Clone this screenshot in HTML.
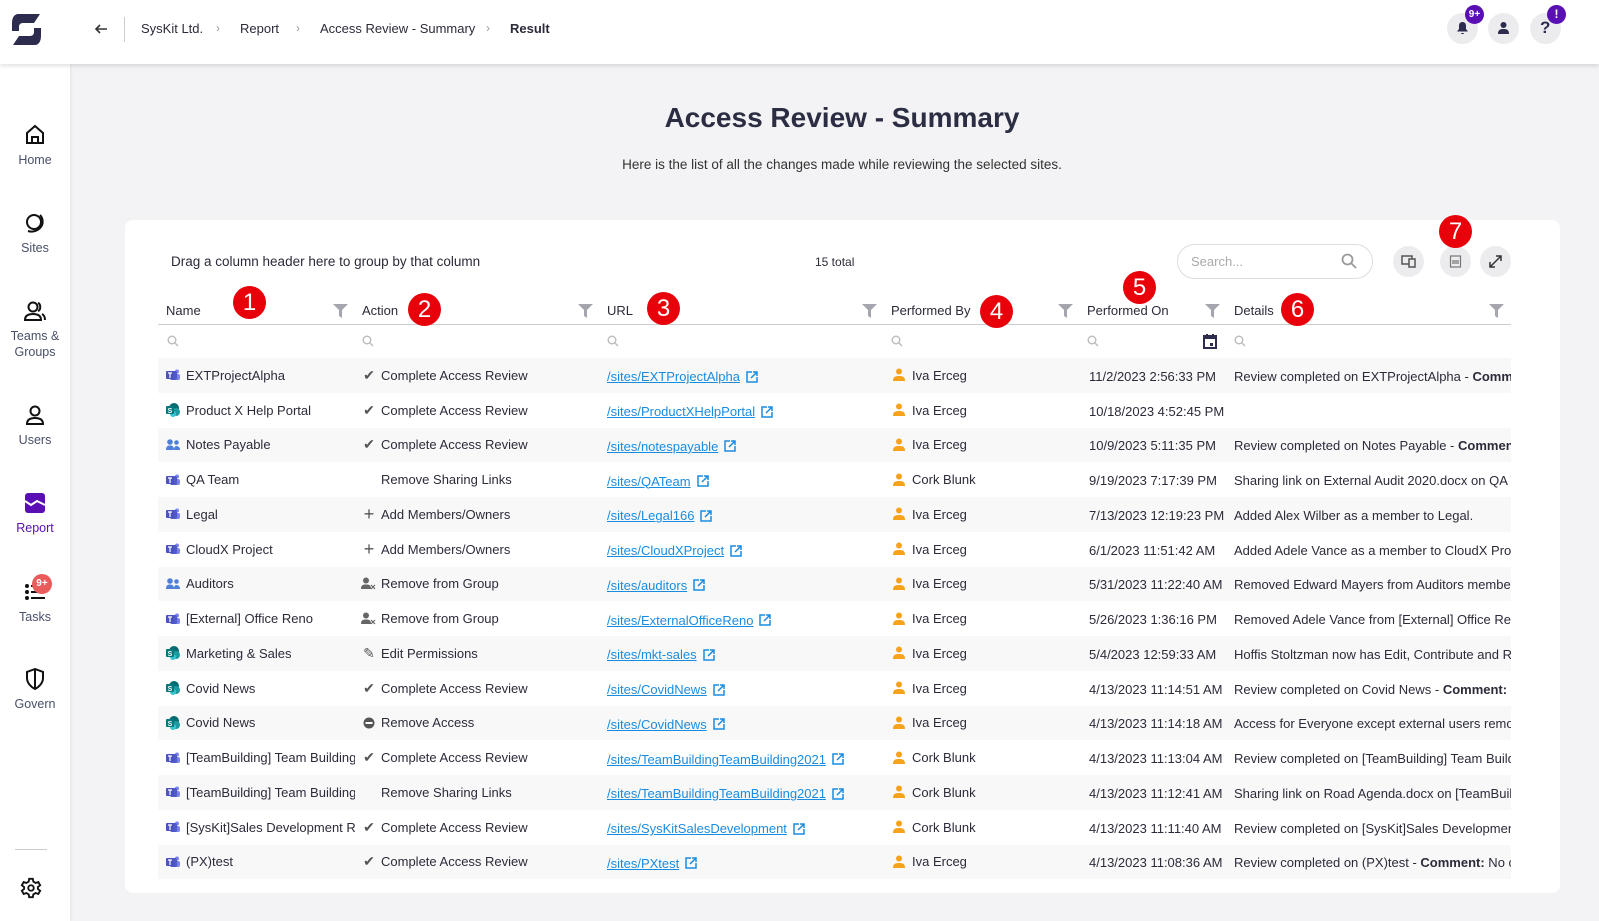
<!DOCTYPE html>
<html><head><meta charset="utf-8"><style>
*{box-sizing:border-box;margin:0;padding:0}
body{width:1599px;height:921px;overflow:hidden;background:#f3f3f5;font-family:"Liberation Sans",sans-serif;color:#2b2b3a;position:relative}
.top{position:absolute;left:0;top:0;width:1599px;height:64px;background:#fff;box-shadow:0 2px 4px rgba(0,0,0,.12);z-index:2}
.side{position:absolute;left:0;top:64px;width:70px;height:857px;background:#fff;box-shadow:1px 0 3px rgba(0,0,0,.06)}
.nav{position:absolute;left:0;width:70px;text-align:center;font-size:12.5px;color:#4a4f6a;line-height:16px}
.nav svg{display:block;margin:0 auto 6px}
.bc{position:absolute;top:21px;font-size:13px;color:#2b2b3a}
.sep{position:absolute;top:21px;font-size:12px;color:#999}
.cb{position:absolute;width:31px;height:31px;border-radius:50%;background:#ececef;top:13px}
.bd{position:absolute;background:#5a0fb4;color:#fff;border-radius:50%;font-size:10px;font-weight:bold;text-align:center}
h1{position:absolute;left:0;width:1684px;top:102px;text-align:center;font-size:28px;font-weight:bold;color:#2b2d42}
.sub{position:absolute;width:1684px;top:157px;text-align:center;font-size:13.5px;color:#333}
.card{position:absolute;left:125px;top:220px;width:1435px;height:673px;background:#fff;border-radius:8px}
.hd{position:absolute;top:303px;font-size:13px;color:#2b2b3a}
.flt{position:absolute;top:304px}
.mg{position:absolute;top:335px}
.num{position:absolute;width:33px;height:33px;border-radius:50%;background:#e8000a;color:#fff;font-size:24px;text-align:center;line-height:33px;font-family:"Liberation Sans",sans-serif}
.rows{position:absolute;left:158px;top:358px;width:1353px}
.r{height:34.75px;display:flex;font-size:13px;color:#2b2b3a;align-items:center;white-space:nowrap}
.r:nth-child(odd){background:#f8f8f8}
.c{overflow:hidden;display:flex;align-items:center;height:100%}
.n{width:197px;padding-left:8px}.a{width:245px;padding-left:6px}.u{width:284px;padding-left:7px;padding-top:3px}.p{width:196px;padding-left:9px}.d{width:147px;padding-left:9px;padding-top:2px}.x{width:284px;padding-left:7px;padding-top:2px}
.ic{width:14px;height:14px;margin-right:6px;flex:none}
.ai{width:16px;margin-right:4px;color:#555;font-size:14px;display:inline-flex;justify-content:center;flex:none}
.u a{color:#1a8ce0;text-decoration:underline}
.pi{margin-right:7px;flex:none}
</style></head><body>
<div class="top">
<svg style="position:absolute;left:10px;top:13px" width="33" height="33" viewBox="0 0 33 33"><path d="M8 1H30L24 10H13C10 10 9 12 9 14V18H2V10C2 4 5 1 8 1ZM25 32H3L9 23H20C23 23 24 21 24 19V15H31V23C31 29 28 32 25 32Z" fill="#2d2b4e"/></svg>
<svg style="position:absolute;left:94px;top:22px" width="14" height="14" viewBox="0 0 14 14"><path d="M13 7H2M6 3L2 7L6 11" stroke="#333" stroke-width="1.6" fill="none"/></svg>
<div style="position:absolute;left:124px;top:17px;width:1px;height:25px;background:#ccc"></div>
<span class="bc" style="left:141px">SysKit Ltd.</span><span class="sep" style="left:216px">›</span>
<span class="bc" style="left:240px">Report</span><span class="sep" style="left:296px">›</span>
<span class="bc" style="left:320px">Access Review - Summary</span><span class="sep" style="left:486px">›</span>
<span class="bc" style="left:510px;font-weight:bold">Result</span>
<div class="cb" style="left:1447px"><svg style="position:absolute;left:9px;top:8px" width="13" height="14" viewBox="0 0 13 14"><path d="M6.5 1C3.8 1 3 3 3 5V8L1 10.5H12L10 8V5C10 3 9.2 1 6.5 1ZM5 12H8C8 13.5 5 13.5 5 12Z" fill="#2d2b4e"/></svg></div>
<div class="bd" style="left:1465px;top:5px;width:19px;height:19px;line-height:19px">9+</div>
<div class="cb" style="left:1488px"><svg style="position:absolute;left:9px;top:8px" width="13" height="14" viewBox="0 0 13 14"><circle cx="6.5" cy="4" r="3" fill="#2d2b4e"/><path d="M1 13C1 9 3 8 6.5 8S12 9 12 13Z" fill="#2d2b4e"/></svg></div>
<div class="cb" style="left:1530px"><span style="position:absolute;left:10px;top:5px;font-size:17px;font-weight:bold;color:#2d2b4e">?</span></div>
<div class="bd" style="left:1547px;top:5px;width:19px;height:19px;line-height:19px;font-size:12px">!</div>
</div>
<div class="side">
<div class="nav" style="top:60px"><svg width="22" height="22" viewBox="0 0 22 22" fill="none" stroke="#111" stroke-width="2"><path d="M3 9L11 2L19 9V19H3Z"/><path d="M8 19V13H14V19"/></svg>Home</div>
<div class="nav" style="top:148px"><svg width="22" height="22" viewBox="0 0 22 22" fill="none" stroke="#111" stroke-width="2"><circle cx="10" cy="10" r="7"/><path d="M16 3C19 6 20 12 16 16C12 20 7 20 4 19"/></svg>Sites</div>
<div class="nav" style="top:236px"><svg width="24" height="22" viewBox="0 0 24 22" fill="none" stroke="#111" stroke-width="2"><circle cx="10" cy="7" r="4.5"/><path d="M2 20C2 15 6 14 10 14S18 15 18 20Z"/><path d="M15 3C18 4 18 10 15 11M19 14C21 15 22 17 22 20"/></svg>Teams &amp;<br>Groups</div>
<div class="nav" style="top:340px"><svg width="22" height="22" viewBox="0 0 22 22" fill="none" stroke="#111" stroke-width="2"><circle cx="11" cy="7" r="4.5"/><path d="M3 20C3 15 7 14 11 14S19 15 19 20Z"/></svg>Users</div>
<div class="nav" style="top:428px;color:#5a0fb4"><svg width="22" height="22" viewBox="0 0 22 22"><rect x="1" y="1" width="20" height="20" rx="3" fill="#5a0fb4"/><path d="M1 9L7 13L13 9L21 13" stroke="#fff" stroke-width="2" fill="none"/></svg>Report</div>
<div class="nav" style="top:517px"><svg width="22" height="22" viewBox="0 0 22 22" fill="#111"><circle cx="3" cy="5" r="2"/><circle cx="3" cy="11" r="2"/><circle cx="3" cy="17" r="2"/><rect x="7" y="4" width="14" height="2"/><rect x="7" y="10" width="14" height="2"/><rect x="7" y="16" width="14" height="2"/></svg>Tasks</div>
<div style="position:absolute;left:32px;top:510px;width:20px;height:20px;border-radius:50%;background:#e85c5c;color:#fff;font-size:10px;font-weight:bold;text-align:center;line-height:20px">9+</div>
<div class="nav" style="top:604px"><svg width="22" height="22" viewBox="0 0 22 22" fill="none" stroke="#111" stroke-width="2"><path d="M11 1L3 4V10C3 15 7 19 11 21C15 19 19 15 19 10V4Z"/><path d="M11 1V21"/></svg>Govern</div>
<div style="position:absolute;left:15px;top:785px;width:32px;height:1px;background:#ccc"></div>
<svg style="position:absolute;left:20px;top:813px" width="22" height="22" viewBox="0 0 24 24" fill="none" stroke="#111" stroke-width="2"><circle cx="12" cy="12" r="3"/><path d="M10 2H14L14.5 5L17 6.5L20 5.5L22 9L19.5 11V13L22 15L20 18.5L17 17.5L14.5 19L14 22H10L9.5 19L7 17.5L4 18.5L2 15L4.5 13V11L2 9L4 5.5L7 6.5L9.5 5Z"/></svg>
</div>
<h1>Access Review - Summary</h1>
<div class="sub">Here is the list of all the changes made while reviewing the selected sites.</div>
<div class="card"></div>
<div style="position:absolute;left:171px;top:254px;font-size:13.5px">Drag a column header here to group by that column</div>
<div style="position:absolute;left:815px;top:255px;font-size:12px">15 total</div>
<div style="position:absolute;left:1177px;top:244px;width:196px;height:35px;border:1px solid #ddd;border-radius:18px"><span style="position:absolute;left:13px;top:9px;font-size:13px;color:#aaa">Search...</span><svg style="position:absolute;left:163px;top:8px" width="16" height="16" viewBox="0 0 16 16" fill="none" stroke="#999" stroke-width="1.8"><circle cx="6.5" cy="6.5" r="5"/><path d="M10 10L15 15"/></svg></div>
<div class="cb" style="left:1393px;top:246px"><svg style="position:absolute;left:8px;top:9px" width="15" height="13" viewBox="0 0 15 13" fill="none" stroke="#555" stroke-width="1.5"><rect x="1" y="1" width="10" height="8"/><rect x="8" y="4" width="6" height="8" fill="#ececef"/></svg></div>
<div class="cb" style="left:1440px;top:246px"><svg style="position:absolute;left:9px;top:9px" width="13" height="13" viewBox="0 0 13 13" fill="none" stroke="#777" stroke-width="1.2"><rect x="1.5" y="1" width="10" height="11"/><path d="M3 6H10M3 8H10"/></svg></div>
<div class="cb" style="left:1480px;top:246px"><svg style="position:absolute;left:9px;top:9px" width="13" height="13" viewBox="0 0 13 13" fill="none" stroke="#333" stroke-width="1.5"><path d="M1 12L12 1M7 1H12V6M1 7V12H6"/></svg></div>
<span class="hd" style="left:166px">Name</span><span class="hd" style="left:362px">Action</span><span class="hd" style="left:607px">URL</span><span class="hd" style="left:891px">Performed By</span><span class="hd" style="left:1087px">Performed On</span><span class="hd" style="left:1234px">Details</span>
<svg class="flt" style="left:333px" width="15" height="14" viewBox="0 0 15 14"><path d="M0 0H15L9 6V14L6 12V6Z" fill="#a5a5ae"/></svg>
<svg class="flt" style="left:578px" width="15" height="14" viewBox="0 0 15 14"><path d="M0 0H15L9 6V14L6 12V6Z" fill="#a5a5ae"/></svg>
<svg class="flt" style="left:862px" width="15" height="14" viewBox="0 0 15 14"><path d="M0 0H15L9 6V14L6 12V6Z" fill="#a5a5ae"/></svg>
<svg class="flt" style="left:1058px" width="15" height="14" viewBox="0 0 15 14"><path d="M0 0H15L9 6V14L6 12V6Z" fill="#a5a5ae"/></svg>
<svg class="flt" style="left:1205px" width="15" height="14" viewBox="0 0 15 14"><path d="M0 0H15L9 6V14L6 12V6Z" fill="#a5a5ae"/></svg>
<svg class="flt" style="left:1489px" width="15" height="14" viewBox="0 0 15 14"><path d="M0 0H15L9 6V14L6 12V6Z" fill="#a5a5ae"/></svg>
<div style="position:absolute;left:158px;top:324px;width:1353px;height:1px;background:#ccc"></div>
<svg class="mg" style="left:167px" width="12" height="12" viewBox="0 0 12 12" fill="none" stroke="#bbb" stroke-width="1.4"><circle cx="5" cy="5" r="3.8"/><path d="M8 8L11 11"/></svg>
<svg class="mg" style="left:362px" width="12" height="12" viewBox="0 0 12 12" fill="none" stroke="#bbb" stroke-width="1.4"><circle cx="5" cy="5" r="3.8"/><path d="M8 8L11 11"/></svg>
<svg class="mg" style="left:607px" width="12" height="12" viewBox="0 0 12 12" fill="none" stroke="#bbb" stroke-width="1.4"><circle cx="5" cy="5" r="3.8"/><path d="M8 8L11 11"/></svg>
<svg class="mg" style="left:891px" width="12" height="12" viewBox="0 0 12 12" fill="none" stroke="#bbb" stroke-width="1.4"><circle cx="5" cy="5" r="3.8"/><path d="M8 8L11 11"/></svg>
<svg class="mg" style="left:1087px" width="12" height="12" viewBox="0 0 12 12" fill="none" stroke="#bbb" stroke-width="1.4"><circle cx="5" cy="5" r="3.8"/><path d="M8 8L11 11"/></svg>
<svg class="mg" style="left:1234px" width="12" height="12" viewBox="0 0 12 12" fill="none" stroke="#bbb" stroke-width="1.4"><circle cx="5" cy="5" r="3.8"/><path d="M8 8L11 11"/></svg>
<svg style="position:absolute;left:1203px;top:334px" width="14" height="15" viewBox="0 0 14 15"><rect x="1" y="2" width="12" height="12" fill="none" stroke="#2d2b4e" stroke-width="2"/><rect x="1" y="2" width="12" height="3" fill="#2d2b4e"/><rect x="7" y="9" width="3" height="3" fill="#2d2b4e"/><rect x="3" y="0" width="2" height="3" fill="#2d2b4e"/><rect x="9" y="0" width="2" height="3" fill="#2d2b4e"/></svg>
<svg width="0" height="0" style="position:absolute"><defs>
<symbol id="tm" viewBox="0 0 14 14"><circle cx="11" cy="3.5" r="2" fill="#7b83eb"/><rect x="8" y="6" width="6" height="6" rx="2" fill="#7b83eb"/><rect x="4" y="3" width="7" height="9" rx="2" fill="#5059c9"/><rect x="0" y="3" width="8" height="8" rx="1" fill="#4b53bc"/><path d="M2 5H6M4 5V10" stroke="#fff" stroke-width="1.2"/></symbol>
<symbol id="sp" viewBox="0 0 14 14"><circle cx="8" cy="5" r="5" fill="#036c70"/><circle cx="10" cy="9" r="4" fill="#1a9ba1"/><circle cx="7" cy="11" r="3" fill="#37c6d0"/><rect x="0" y="3" width="8" height="8" rx="1" fill="#03787c"/><text x="4" y="10" font-size="7" fill="#fff" text-anchor="middle" font-family="Liberation Sans" font-weight="bold">S</text></symbol>
<symbol id="gr" viewBox="0 0 14 14"><circle cx="4" cy="4" r="2.8" fill="#4f7fd8"/><circle cx="10.5" cy="4.5" r="2.3" fill="#4f7fd8"/><path d="M0 12C0 8 2 7.5 4 7.5S8 8 8 12Z" fill="#4f7fd8"/><path d="M8 12C8 9 9 8 10.5 8S14 9 14 12Z" fill="#4f7fd8"/></symbol>
<symbol id="pp" viewBox="0 0 12 14"><circle cx="6" cy="3.5" r="3" fill="#f7a21b"/><path d="M0 13C0 9 2 8 6 8S12 9 12 13Z" fill="#f7a21b"/></symbol>
<symbol id="ex" viewBox="0 0 14 14"><path d="M7 2H2V12H12V7" fill="none" stroke="#1a8ce0" stroke-width="1.5"/><path d="M6 8L12 2M8 2H12V6" fill="none" stroke="#1a8ce0" stroke-width="1.5"/></symbol>
<symbol id="rg" viewBox="0 0 16 14"><circle cx="5" cy="3.5" r="3" fill="#666"/><path d="M0 12C0 8 2 7.5 5 7.5S10 8 10 12Z" fill="#666"/><path d="M10 8L14 12M14 8L10 12" stroke="#666" stroke-width="1.2"/></symbol>
<symbol id="ra" viewBox="0 0 12 12"><circle cx="6" cy="6" r="5.5" fill="#555"/><rect x="2.5" y="5" width="7" height="2" fill="#fff"/></symbol>
</defs></svg>
<div class="rows">
<div class="r"><div class="c n"><svg class="ic"><use href="#tm"/></svg>EXTProjectAlpha</div><div class="c a"><span class="ai">✔</span>Complete Access Review</div><div class="c u"><a>/sites/EXTProjectAlpha</a><svg width="14" height="14" style="margin-left:5px"><use href="#ex"/></svg></div><div class="c p"><svg class="pi" width="12" height="14"><use href="#pp"/></svg>Iva Erceg</div><div class="c d">11/2/2023 2:56:33 PM</div><div class="c x">Review completed on EXTProjectAlpha -&nbsp;<b>Comment:</b>&nbsp;Done</div></div>
<div class="r"><div class="c n"><svg class="ic"><use href="#sp"/></svg>Product X Help Portal</div><div class="c a"><span class="ai">✔</span>Complete Access Review</div><div class="c u"><a>/sites/ProductXHelpPortal</a><svg width="14" height="14" style="margin-left:5px"><use href="#ex"/></svg></div><div class="c p"><svg class="pi" width="12" height="14"><use href="#pp"/></svg>Iva Erceg</div><div class="c d">10/18/2023 4:52:45 PM</div><div class="c x"></div></div>
<div class="r"><div class="c n"><svg class="ic"><use href="#gr"/></svg>Notes Payable</div><div class="c a"><span class="ai">✔</span>Complete Access Review</div><div class="c u"><a>/sites/notespayable</a><svg width="14" height="14" style="margin-left:5px"><use href="#ex"/></svg></div><div class="c p"><svg class="pi" width="12" height="14"><use href="#pp"/></svg>Iva Erceg</div><div class="c d">10/9/2023 5:11:35 PM</div><div class="c x">Review completed on Notes Payable -&nbsp;<b>Comment:</b>&nbsp;Ok</div></div>
<div class="r"><div class="c n"><svg class="ic"><use href="#tm"/></svg>QA Team</div><div class="c a"><span class="ai"></span>Remove Sharing Links</div><div class="c u"><a>/sites/QATeam</a><svg width="14" height="14" style="margin-left:5px"><use href="#ex"/></svg></div><div class="c p"><svg class="pi" width="12" height="14"><use href="#pp"/></svg>Cork Blunk</div><div class="c d">9/19/2023 7:17:39 PM</div><div class="c x">Sharing link on External Audit 2020.docx on QA Team</div></div>
<div class="r"><div class="c n"><svg class="ic"><use href="#tm"/></svg>Legal</div><div class="c a"><span class="ai" style="font-size:18px">+</span>Add Members/Owners</div><div class="c u"><a>/sites/Legal166</a><svg width="14" height="14" style="margin-left:5px"><use href="#ex"/></svg></div><div class="c p"><svg class="pi" width="12" height="14"><use href="#pp"/></svg>Iva Erceg</div><div class="c d">7/13/2023 12:19:23 PM</div><div class="c x">Added Alex Wilber as a member to Legal.</div></div>
<div class="r"><div class="c n"><svg class="ic"><use href="#tm"/></svg>CloudX Project</div><div class="c a"><span class="ai" style="font-size:18px">+</span>Add Members/Owners</div><div class="c u"><a>/sites/CloudXProject</a><svg width="14" height="14" style="margin-left:5px"><use href="#ex"/></svg></div><div class="c p"><svg class="pi" width="12" height="14"><use href="#pp"/></svg>Iva Erceg</div><div class="c d">6/1/2023 11:51:42 AM</div><div class="c x">Added Adele Vance as a member to CloudX Project.</div></div>
<div class="r"><div class="c n"><svg class="ic"><use href="#gr"/></svg>Auditors</div><div class="c a"><span class="ai"><svg width="16" height="14"><use href="#rg"/></svg></span>Remove from Group</div><div class="c u"><a>/sites/auditors</a><svg width="14" height="14" style="margin-left:5px"><use href="#ex"/></svg></div><div class="c p"><svg class="pi" width="12" height="14"><use href="#pp"/></svg>Iva Erceg</div><div class="c d">5/31/2023 11:22:40 AM</div><div class="c x">Removed Edward Mayers from Auditors members.</div></div>
<div class="r"><div class="c n"><svg class="ic"><use href="#tm"/></svg>[External] Office Reno</div><div class="c a"><span class="ai"><svg width="16" height="14"><use href="#rg"/></svg></span>Remove from Group</div><div class="c u"><a>/sites/ExternalOfficeReno</a><svg width="14" height="14" style="margin-left:5px"><use href="#ex"/></svg></div><div class="c p"><svg class="pi" width="12" height="14"><use href="#pp"/></svg>Iva Erceg</div><div class="c d">5/26/2023 1:36:16 PM</div><div class="c x">Removed Adele Vance from [External] Office Reno</div></div>
<div class="r"><div class="c n"><svg class="ic"><use href="#sp"/></svg>Marketing &amp; Sales</div><div class="c a"><span class="ai">✎</span>Edit Permissions</div><div class="c u"><a>/sites/mkt-sales</a><svg width="14" height="14" style="margin-left:5px"><use href="#ex"/></svg></div><div class="c p"><svg class="pi" width="12" height="14"><use href="#pp"/></svg>Iva Erceg</div><div class="c d">5/4/2023 12:59:33 AM</div><div class="c x">Hoffis Stoltzman now has Edit, Contribute and Read</div></div>
<div class="r"><div class="c n"><svg class="ic"><use href="#sp"/></svg>Covid News</div><div class="c a"><span class="ai">✔</span>Complete Access Review</div><div class="c u"><a>/sites/CovidNews</a><svg width="14" height="14" style="margin-left:5px"><use href="#ex"/></svg></div><div class="c p"><svg class="pi" width="12" height="14"><use href="#pp"/></svg>Iva Erceg</div><div class="c d">4/13/2023 11:14:51 AM</div><div class="c x">Review completed on Covid News -&nbsp;<b>Comment:</b>&nbsp;Reviewed</div></div>
<div class="r"><div class="c n"><svg class="ic"><use href="#sp"/></svg>Covid News</div><div class="c a"><span class="ai"><svg width="12" height="12"><use href="#ra"/></svg></span>Remove Access</div><div class="c u"><a>/sites/CovidNews</a><svg width="14" height="14" style="margin-left:5px"><use href="#ex"/></svg></div><div class="c p"><svg class="pi" width="12" height="14"><use href="#pp"/></svg>Iva Erceg</div><div class="c d">4/13/2023 11:14:18 AM</div><div class="c x">Access for Everyone except external users removed</div></div>
<div class="r"><div class="c n"><svg class="ic"><use href="#tm"/></svg>[TeamBuilding] Team Building</div><div class="c a"><span class="ai">✔</span>Complete Access Review</div><div class="c u"><a>/sites/TeamBuildingTeamBuilding2021</a><svg width="14" height="14" style="margin-left:5px"><use href="#ex"/></svg></div><div class="c p"><svg class="pi" width="12" height="14"><use href="#pp"/></svg>Cork Blunk</div><div class="c d">4/13/2023 11:13:04 AM</div><div class="c x">Review completed on [TeamBuilding] Team Building</div></div>
<div class="r"><div class="c n"><svg class="ic"><use href="#tm"/></svg>[TeamBuilding] Team Building</div><div class="c a"><span class="ai"></span>Remove Sharing Links</div><div class="c u"><a>/sites/TeamBuildingTeamBuilding2021</a><svg width="14" height="14" style="margin-left:5px"><use href="#ex"/></svg></div><div class="c p"><svg class="pi" width="12" height="14"><use href="#pp"/></svg>Cork Blunk</div><div class="c d">4/13/2023 11:12:41 AM</div><div class="c x">Sharing link on Road Agenda.docx on [TeamBuilding]</div></div>
<div class="r"><div class="c n"><svg class="ic"><use href="#tm"/></svg>[SysKit]Sales Development Rep</div><div class="c a"><span class="ai">✔</span>Complete Access Review</div><div class="c u"><a>/sites/SysKitSalesDevelopment</a><svg width="14" height="14" style="margin-left:5px"><use href="#ex"/></svg></div><div class="c p"><svg class="pi" width="12" height="14"><use href="#pp"/></svg>Cork Blunk</div><div class="c d">4/13/2023 11:11:40 AM</div><div class="c x">Review completed on [SysKit]Sales Development</div></div>
<div class="r"><div class="c n"><svg class="ic"><use href="#tm"/></svg>(PX)test</div><div class="c a"><span class="ai">✔</span>Complete Access Review</div><div class="c u"><a>/sites/PXtest</a><svg width="14" height="14" style="margin-left:5px"><use href="#ex"/></svg></div><div class="c p"><svg class="pi" width="12" height="14"><use href="#pp"/></svg>Iva Erceg</div><div class="c d">4/13/2023 11:08:36 AM</div><div class="c x">Review completed on (PX)test -&nbsp;<b>Comment:</b>&nbsp;No changes</div></div>
</div>
<div class="num" style="left:233px;top:286px">1</div>
<div class="num" style="left:408px;top:293px">2</div>
<div class="num" style="left:647px;top:292px">3</div>
<div class="num" style="left:980px;top:295px">4</div>
<div class="num" style="left:1123px;top:271px">5</div>
<div class="num" style="left:1281px;top:293px">6</div>
<div class="num" style="left:1439px;top:215px">7</div>
</body></html>
